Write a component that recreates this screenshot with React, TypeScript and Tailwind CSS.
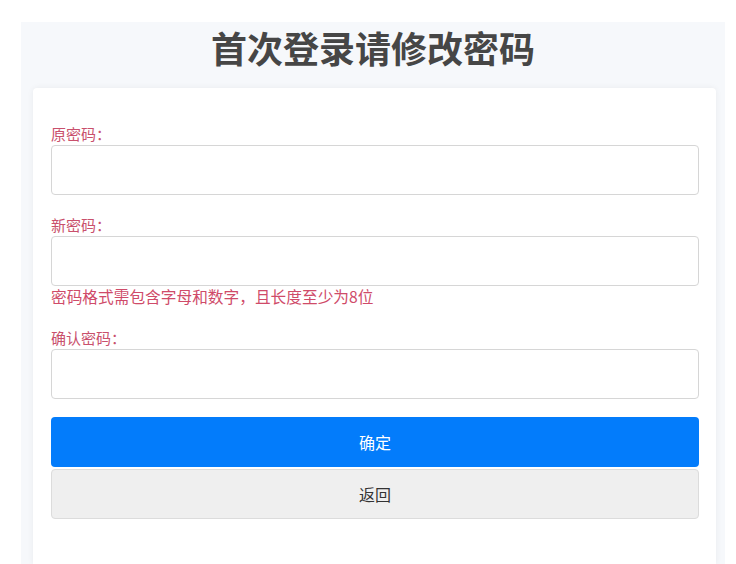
import { useState } from "react";

const fieldClass =
  "block w-full h-[50px] rounded-[4px] border border-[#d6d6d6] bg-white px-3 text-[15px] text-[#333] outline-none";

const PasswordPage = () => {
  const [oldPwd, setOldPwd] = useState("");
  const [newPwd, setNewPwd] = useState("");
  const [confirmPwd, setConfirmPwd] = useState("");

  return (
    <div
      className="min-h-screen w-full bg-white pt-[22px] pl-[21px] pr-[11px]"
      style={{ fontFamily: '"Noto Sans CJK SC", "Noto Sans", sans-serif' }}
    >
      <div className="bg-[#f6f8fb] min-h-[542px] flex flex-col">
        <h1 className="text-center text-[36px] leading-[50px] font-bold text-[#464646]">
          首次登录请修改密码
        </h1>

        <div className="mt-[16px] ml-[12px] mr-[9px] flex-1 rounded-t-[4px] bg-white shadow-[0_0_6px_rgba(0,0,0,0.06)] pt-[35px] pl-[18px] pr-[17px] pb-10">
          <label className="block text-[15px] leading-[22px] text-[#c9506c]">
            原密码：
          </label>
          <input
            type="password"
            className={fieldClass}
            value={oldPwd}
            onChange={(e) => setOldPwd(e.target.value)}
          />

          <label className="mt-[19px] block text-[15px] leading-[22px] text-[#c9506c]">
            新密码：
          </label>
          <input
            type="password"
            className={fieldClass}
            value={newPwd}
            onChange={(e) => setNewPwd(e.target.value)}
          />
          <p className="text-[15.7px] leading-[22px] text-[#cf4b69]">
            密码格式需包含字母和数字，且长度至少为8位
          </p>

          <label className="mt-[19px] block text-[15px] leading-[22px] text-[#c9506c]">
            确认密码：
          </label>
          <input
            type="password"
            className={fieldClass}
            value={confirmPwd}
            onChange={(e) => setConfirmPwd(e.target.value)}
          />

          <button className="mt-[18px] flex h-[50px] w-full items-center justify-center rounded-[4px] bg-[#037cfb] text-[16px] text-white">
            确定
          </button>
          <button className="mt-[2px] flex h-[50px] w-full items-center justify-center rounded-[4px] border border-[#dcdcdc] bg-[#efefef] text-[16px] text-[#333]">
            返回
          </button>
        </div>
      </div>
    </div>
  );
};

export default PasswordPage;
